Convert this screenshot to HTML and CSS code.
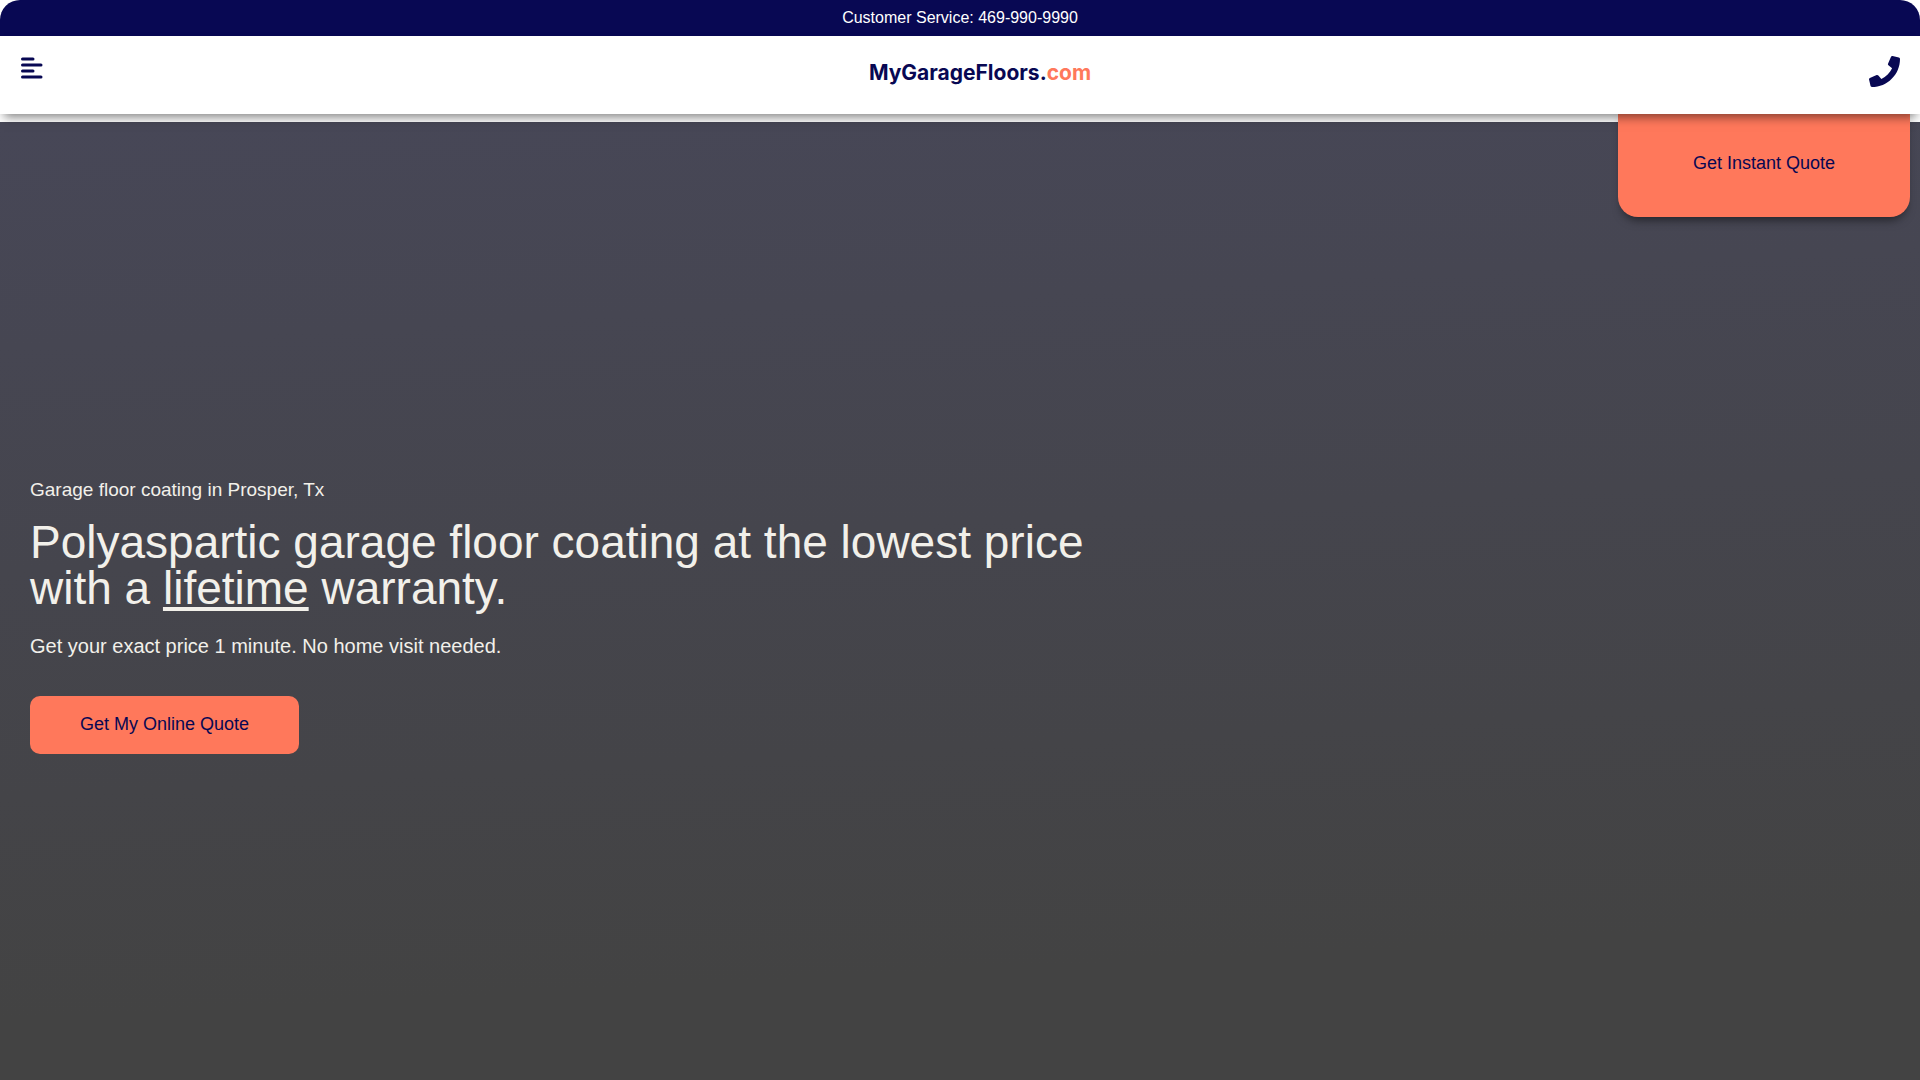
FILE: index.html
```html
<!DOCTYPE html>
<html lang="en">
<head>
    <meta charset="UTF-8">
    <meta name="viewport" content="width=device-width, initial-scale=1.0">
    <title>MyGarageFloors.com</title>
    <link rel="stylesheet" href="styles.css">
</head>
<body>

    <header class="header">
        <div class="top-bar">Customer Service: 469-990-9990</div>
        <nav class="navbar">
            <button class="menu-btn" type="button" aria-label="Open menu">
                <svg width="24" height="24" viewBox="0 0 24 24" fill="none" stroke="currentColor" stroke-width="3" stroke-linecap="round">
                    <path d="M2.5 3H13M2.5 9H21M2.5 15H13M2.5 21H21"/>
                </svg>
            </button>
            <a class="logo" href="#">MyGarageFloors.<span>com</span></a>
            <a class="phone" href="tel:4699909990" aria-label="Call us">
                <svg width="31" height="31" viewBox="0 0 512 512" fill="currentColor">
                    <path d="M493.4 24.6l-104-24c-11.3-2.6-22.9 3.3-27.5 13.9l-48 112c-4.2 9.8-1.4 21.3 6.9 28l60.6 49.6c-36 76.7-98.9 140.5-177.2 177.2l-49.6-60.6c-6.8-8.3-18.2-11.1-28-6.9l-112 48C3.9 366.5-2 378.1.6 389.4l24 104C27.1 504.2 36.7 512 48 512c256.1 0 464-207.5 464-464 0-11.2-7.7-20.9-18.6-23.4z"/>
                </svg>
            </a>
        </nav>
        <button class="quote-tab" type="button">Get Instant Quote</button>
    </header>

    <main class="hero">
        <p class="location">Garage floor coating in Prosper, Tx</p>
        <h1>Polyaspartic garage floor coating at the lowest price with a <u>lifetime</u> warranty.</h1>
        <p class="subtitle">Get your exact price 1 minute. No home visit needed.</p>
        <button class="quote-btn" type="button">Get My Online Quote</button>
    </main>

</body>
</html>
```

FILE: styles.css
```css
* {
    box-sizing: border-box;
    margin: 0;
    padding: 0;
}
body {
    font-family: "Liberation Sans", Arial, sans-serif;
    background-color: #fff;
}
button {
    font-family: inherit;
    font-size: 18px;
    color: #080853;
    border: none;
    cursor: pointer;
}

/* header */
.header {
    position: relative;
    z-index: 1;
    margin-bottom: 8px;
}
.top-bar {
    height: 36px;
    line-height: 36px;
    text-align: center;
    color: #fff;
    background-color: #080853;
    border-radius: 20px 20px 0 0;
}
.navbar {
    position: relative;
    z-index: 1;
    display: flex;
    justify-content: space-between;
    align-items: flex-start;
    height: 78px;
    padding: 20px 20px 0;
    background-color: #fff;
    box-shadow: 0 7px 10px -4px rgba(0, 0, 0, 0.5);
}
.menu-btn {
    display: flex;
    width: 71px;
    background: none;
}
.logo {
    font-family: Inter, sans-serif;
    font-size: 21px;
    line-height: 34px;
    font-weight: bold;
    color: #080853;
    text-decoration: none;
}
.logo span {
    color: #ff785b;
}
.phone {
    display: flex;
    color: #080853;
}
.quote-tab {
    position: absolute;
    top: 109px;
    right: 10px;
    width: 292px;
    height: 108px;
    background-color: #ff785b;
    border-radius: 0 0 20px 20px;
    box-shadow: 0 7px 10px -4px rgba(0, 0, 0, 0.5);
}

/* hero */
.hero {
    display: flex;
    flex-direction: column;
    justify-content: center;
    align-items: flex-start;
    min-height: calc(100vh - 122px);
    padding: 30px 30px 0;
    color: #f2f0ea;
    background: linear-gradient(177deg, #474757, #434343 85%);
}
.location {
    font-size: 19px;
    line-height: 22px;
}
h1 {
    max-width: 1100px;
    margin: 18px 0 23px;
    font-size: 46px;
    line-height: 46px;
    font-weight: normal;
}
.subtitle {
    margin-bottom: 38px;
    font-size: 20px;
    line-height: 24px;
}
.quote-btn {
    height: 58px;
    padding: 0 50px;
    background-color: #ff785b;
    border-radius: 10px;
}
```
